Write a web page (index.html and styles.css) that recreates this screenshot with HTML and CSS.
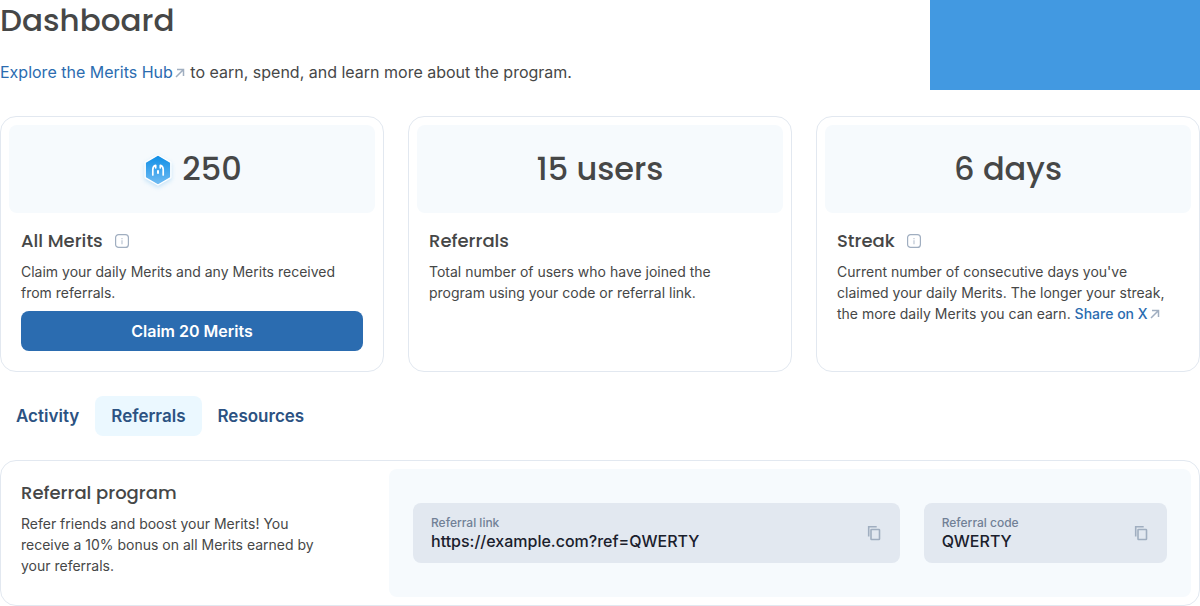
FILE: index.html
```html
<!DOCTYPE html>
<html lang="en">
<head>
<meta charset="utf-8">
<meta name="viewport" content="width=device-width, initial-scale=1">
<title>Dashboard</title>
<link rel="stylesheet" href="styles.css">
</head>
<body>
<main class="page">
  <header class="header">
    <div class="intro">
      <h1 class="page-title">Dashboard</h1>
      <p class="lead"><a class="link" href="#hub">Explore the Merits Hub<svg class="arrow" viewBox="0 0 12 12" aria-hidden="true"><path d="M3 2.5h6.5V9M9.5 2.5 2 10"/></svg></a> to earn, spend, and learn more about the program.</p>
    </div>
    <div class="banner"></div>
  </header>

  <section class="cards">
    <article class="card">
      <div class="figure">
        <svg class="merit" viewBox="0 0 30 36" aria-hidden="true">
          <defs><linearGradient id="hex" x1="0" y1="0" x2="0" y2="1"><stop offset="0" stop-color="#0c8de6"/><stop offset="1" stop-color="#73bdf3"/></linearGradient></defs>
          <path d="M16 4 28.800 11.400v15.200L16 34 3.200 26.600V11.400Z" fill="url(#hex)" stroke="#fff" stroke-width="1.400" stroke-linejoin="round"/>
          <path d="M10.800 24v-5.400c0-2.400.9-3.900 2.900-4.300v2.500M21.200 24v-5.400c0-2.400-.9-3.900-2.900-4.300v2.500" fill="none" stroke="#fff" stroke-width="1.700" stroke-linecap="round" stroke-linejoin="round"/>
          <path d="M16 20v2" stroke="#fff" stroke-width="2" stroke-linecap="round"/>
        </svg>
        <span>250</span>
      </div>
      <div class="card-body">
        <div class="title-row">
          <h2 class="title">All Merits</h2>
          <button class="icon-button" type="button" aria-label="About all merits"><svg class="info" viewBox="0 0 14 14" aria-hidden="true"><rect x=".6" y=".6" width="12.800" height="12.800" rx="3"/><path d="M7 6.300v4M7 4v1.200" opacity=".7"/></svg></button>
        </div>
        <p class="text">Claim your daily Merits and any Merits received from referrals.</p>
        <button class="claim" type="button">Claim 20 Merits</button>
      </div>
    </article>
    <article class="card">
      <div class="figure"><span>15 users</span></div>
      <div class="card-body">
        <div class="title-row"><h2 class="title">Referrals</h2></div>
        <p class="text">Total number of users who have joined the program using your code or referral link.</p>
      </div>
    </article>
    <article class="card">
      <div class="figure"><span>6 days</span></div>
      <div class="card-body">
        <div class="title-row">
          <h2 class="title">Streak</h2>
          <button class="icon-button" type="button" aria-label="About the streak"><svg class="info" viewBox="0 0 14 14" aria-hidden="true"><rect x=".6" y=".6" width="12.800" height="12.800" rx="3"/><path d="M7 6.300v4M7 4v1.200" opacity=".7"/></svg></button>
        </div>
        <p class="text">Current number of consecutive days you've claimed your daily Merits. The longer your streak, the more daily Merits you can earn. <a class="link strong" href="#share">Share on X<svg class="arrow" viewBox="0 0 12 12" aria-hidden="true"><path d="M3 2.500h6.500V9M9.500 2.500 2 10"/></svg></a></p>
      </div>
    </article>
  </section>

  <div class="tabs" role="tablist">
    <button class="tab" type="button" role="tab" aria-selected="false">Activity</button>
    <button class="tab selected" type="button" role="tab" aria-selected="true">Referrals</button>
    <button class="tab" type="button" role="tab" aria-selected="false">Resources</button>
  </div>

  <section class="card program">
    <div class="program-text">
      <h2 class="title">Referral program</h2>
      <p class="text">Refer friends and boost your Merits! You receive a 10% bonus on all Merits earned by your referrals.</p>
    </div>
    <div class="fields">
      <div class="field">
        <div class="field-main">
          <label class="label" for="ref-link">Referral link</label>
          <input class="input" id="ref-link" type="text" value="https://example.com?ref=QWERTY" readonly>
        </div>
        <button class="icon-button" type="button" aria-label="Copy referral link"><svg class="copy" viewBox="0 0 20 20" aria-hidden="true"><path d="M4.700 13.500V3.700h8"/><rect x="7" y="6.500" width="8.500" height="10" rx=".6"/></svg></button>
      </div>
      <div class="field">
        <div class="field-main">
          <label class="label" for="ref-code">Referral code</label>
          <input class="input" id="ref-code" type="text" value="QWERTY" readonly>
        </div>
        <button class="icon-button" type="button" aria-label="Copy referral code"><svg class="copy" viewBox="0 0 20 20" aria-hidden="true"><path d="M4.700 13.500V3.700h8"/><rect x="7" y="6.500" width="8.500" height="10" rx=".6"/></svg></button>
      </div>
    </div>
  </section>
</main>
</body>
</html>
```
FILE: styles.css
```css
* { box-sizing: border-box; }
body {
  margin: 0;
  background: #fff;
  color: #464747;
  font: 400 16px/24px Inter, sans-serif;
}
h1, h2, p { margin: 0; }
button, input { font: inherit; color: inherit; border: 0; margin: 0; padding: 0; background: none; }
button { cursor: pointer; }
svg { display: block; fill: none; }

.page { display: flex; flex-direction: column; gap: 24px; }

.header { display: flex; justify-content: space-between; gap: 24px; margin-bottom: 2px; }
.intro { display: flex; flex-direction: column; gap: 20px; }
.page-title { font: 500 31px/40px Poppins, Inter, sans-serif; }
.banner { flex: 0 0 270px; height: 90px; background: #4299e1; }

.link { color: #2b6cb0; text-decoration: none; }
.link.strong { font-weight: 500; white-space: nowrap; }
.arrow {
  display: inline-block;
  width: 12px;
  height: 12px;
  margin-left: 1px;
  vertical-align: -1px;
  stroke: #a0aec0;
  stroke-width: 1.5;
}

.cards { display: grid; grid-template-columns: repeat(3, 1fr); gap: 24px; }
.card { border: 1px solid #e2e8f0; border-radius: 16px; padding: 8px; }
.figure {
  display: flex;
  align-items: center;
  justify-content: center;
  gap: 10px;
  height: 88px;
  border-radius: 8px;
  background: #f6fafd;
  font: 500 32px/40px Poppins, Inter, sans-serif;
}
.merit { width: 30px; height: 36px; overflow: visible; filter: drop-shadow(0 2px 2px #0c8de633); }
.card-body { display: flex; flex-direction: column; gap: 8px; padding: 16px 12px 12px; }
.title-row { display: flex; align-items: center; gap: 12px; }
.title { font: 500 18px/24px Poppins, Inter, sans-serif; }
.text { padding-right: 4px; font-size: 14px; line-height: 21px; }
.icon-button { flex: none; }
.info { width: 14px; height: 14px; stroke: #a0aec0; stroke-width: 1.2; }
.claim {
  height: 40px;
  border-radius: 8px;
  background: #2b6cb0;
  color: #fff;
  font-weight: 600;
}

.tabs { display: flex; }
.tab { height: 40px; padding: 0 16px; border-radius: 8px; color: #2c5282; font-size: 17px; font-weight: 600; }
.tab.selected { background: #ebf8ff; }

.program { display: flex; gap: 24px; }
.program-text {
  flex: 0 0 356px;
  display: flex;
  flex-direction: column;
  gap: 8px;
  padding: 12px 36px 12px 12px;
}
.fields {
  flex: 1;
  display: grid;
  grid-template-columns: 2fr 1fr;
  gap: 24px;
  align-items: center;
  padding: 34px 24px;
  border-radius: 8px;
  background: #f6fafd;
}
.field {
  display: flex;
  align-items: center;
  height: 60px;
  padding: 0 16px 0 18px;
  border-radius: 8px;
  background: #e2e8f0;
}
.field-main { flex: 1; min-width: 0; display: flex; flex-direction: column; }
.label { color: #718096; font-size: 12px; font-weight: 500; line-height: 16px; }
.input { width: 100%; height: 20px; color: #1a202c; font-weight: 500; outline: 0; }
.copy { width: 20px; height: 20px; stroke: #a0aec0; stroke-width: 1.6; }
```
